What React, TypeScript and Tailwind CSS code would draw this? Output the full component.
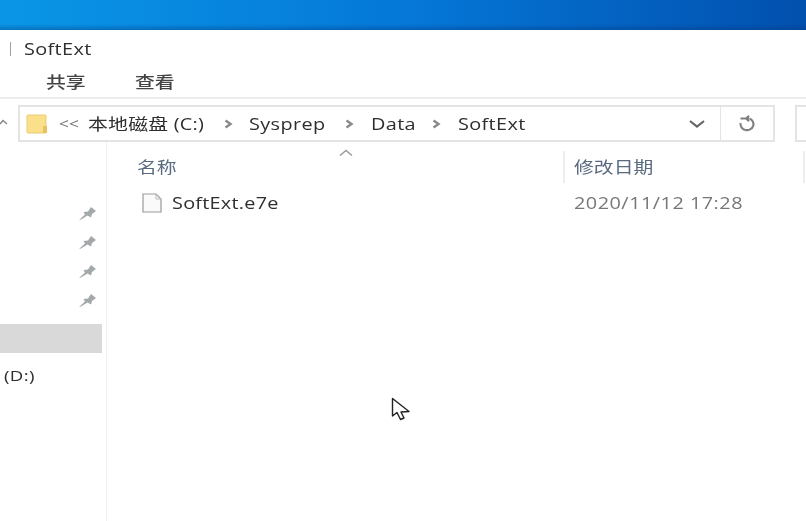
import React from 'react';

const font = { fontFamily: '"Open Sans", "Noto Sans CJK SC", sans-serif' };

// the shot is stretched sideways, so text is scaled and its box holds the final width
const Label: React.FC<{ w: string; className?: string; children: React.ReactNode }> = ({ w, className = '', children }) => (
    <span className={`${w} ${className} shrink-0 block whitespace-nowrap`}>
        <span className="inline-block origin-left scale-x-[1.24] blur-[0.3px]">{children}</span>
    </span>
);

const Pin = () => (
    <svg width="19" height="16" viewBox="0 0 19 16" className="block">
        <path d="M1 15 L7 9.5 L5.5 7 L10 6.5 L13 2 L18 6 L14 9 L13 12.5 L9.5 10.5 L3 14.5 Z" fill="#a3a8ab" />
    </svg>
);

const Crumb = () => (
    <svg width="9" height="10" viewBox="0 0 9 10" className="shrink-0">
        <path d="M1.5 1.5 L6.5 5 L1.5 8.5" fill="none" stroke="#8a8a8a" strokeWidth="2.4" />
    </svg>
);

export default function App() {
    return (
        <div className="w-[806px] h-[521px] overflow-hidden bg-white flex flex-col relative text-[#2e2e2e]" style={font}>
            <div className="h-[30px] shrink-0 bg-[linear-gradient(180deg,transparent_80%,rgba(0,50,120,0.35)),linear-gradient(90deg,#0a96e6_0%,#0578d8_50%,#0250ae_100%)]" />

            <div className="h-[37px] shrink-0 flex items-center">
                <div className="w-px h-[14px] bg-[#a0a0a0] ml-[10px] mr-[13px]" />
                <Label w="w-[66px]" className="text-[16px] tracking-[0.3px]">SoftExt</Label>
            </div>

            <div className="h-[32px] shrink-0 flex items-center border-b-2 border-[#ececec] text-[16px] text-[#444] font-medium">
                <Label w="w-[41px]" className="ml-[46px]">共享</Label>
                <Label w="w-[40px]" className="ml-[48px]">查看</Label>
            </div>

            <div className="h-[43px] shrink-0 flex items-end">
                <svg width="18" height="36" viewBox="0 0 18 36" className="shrink-0">
                    <path d="M0 18 L3 14.5 L7 18" fill="none" stroke="#888" strokeWidth="1.5" />
                </svg>
                <div className="w-[757px] h-[37px] border-2 border-[#e4e4e4] flex items-center shrink-0">
                    <svg width="22" height="20" viewBox="0 0 22 20" className="ml-[6px] shrink-0">
                        <rect x="1" y="1" width="19" height="18" rx="1" fill="#fbe08c" stroke="#eccb6f" />
                        <rect x="17" y="12" width="4" height="7" fill="#e8c25c" />
                    </svg>
                    <Label w="w-[16px]" className="ml-[11px] text-[14px] text-[#777]">&lt;&lt;</Label>
                    <Label w="w-[119px]" className="ml-[13px] text-[16px] tracking-[0.2px]">本地磁盘 (C:)</Label>
                    <span className="ml-[17px]"><Crumb /></span>
                    <Label w="w-[79px]" className="ml-[16px] text-[16px] tracking-[0.3px]">Sysprep</Label>
                    <span className="ml-[17px]"><Crumb /></span>
                    <Label w="w-[44px]" className="ml-[17px] text-[16px] tracking-[0.3px]">Data</Label>
                    <span className="ml-[17px]"><Crumb /></span>
                    <Label w="w-[67px]" className="ml-[17px] text-[16px] tracking-[0.3px]">SoftExt</Label>
                    <svg width="18" height="10" viewBox="0 0 18 10" className="ml-auto mr-[14px] shrink-0">
                        <path d="M2 2 L9 7.5 L16 2" fill="none" stroke="#666" strokeWidth="2.2" />
                    </svg>
                    <div className="w-[53px] h-full border-l border-[#e4e4e4] flex items-center justify-center shrink-0">
                        <svg width="18" height="18" viewBox="0 0 18 18">
                            <path d="M2.5 3.5 H11 M11 0.8 L8.2 3.5 L11 6.2 M11.5 3.6 A6.5 6 0 1 1 2.6 8" fill="none" stroke="#808080" strokeWidth="2.1" />
                        </svg>
                    </div>
                </div>
                <div className="ml-[20px] flex-1 h-[37px] border-y-2 border-l-2 border-[#e4e4e4]" />
            </div>

            <div className="flex-1 flex min-h-0">
                <div className="w-[107px] shrink-0 border-r border-[#f0f0f0] pt-[63px] flex flex-col">
                    <div className="flex flex-col gap-[13px] items-end pr-[9px]">
                        <Pin />
                        <Pin />
                        <Pin />
                        <Pin />
                    </div>
                    <div className="h-[29px] w-[102px] bg-[#d9d9d9] mt-[16px]" />
                    <Label w="w-[32px]" className="text-[15px] ml-[4px] mt-[11px] tracking-[0.3px]">(D:)</Label>
                </div>

                <div className="flex-1 relative">
                    <div className="flex h-[32px] mt-[9px] items-center text-[16px] text-[#5a6b80]">
                        <Label w="w-[426px]" className="ml-[30px]">名称</Label>
                        <div className="w-[2px] h-[32px] bg-[#eeeeee]" />
                        <Label w="w-[229px]" className="ml-[9px]">修改日期</Label>
                        <div className="w-[2px] h-[32px] bg-[#eeeeee]" />
                    </div>
                    <svg width="16" height="8" viewBox="0 0 16 8" className="absolute left-[231px] top-[7px]">
                        <path d="M2 6.5 L8 1.5 L14 6.5" fill="none" stroke="#999" strokeWidth="1.5" />
                    </svg>
                    <div className="flex items-center mt-[7px] h-[26px]">
                        <svg width="20" height="20" viewBox="0 0 20 20" className="ml-[35px] shrink-0">
                            <path d="M1 1 H14 L19 6 V19 H1 Z" fill="#fafafa" stroke="#999" strokeWidth="1.2" />
                            <path d="M14 1 V6 H19" fill="none" stroke="#bbb" />
                        </svg>
                        <Label w="w-[402px]" className="ml-[10px] text-[16px] tracking-[0.2px]">SoftExt.e7e</Label>
                        <Label w="w-[169px]" className="text-[16px] text-[#777] tracking-[0.4px]">2020/11/12 17:28</Label>
                    </div>
                </div>
            </div>

            <svg width="22" height="26" viewBox="0 0 22 26" className="absolute left-[391px] top-[397px]">
                <path d="M1.5 1.5 V19 L6 15.5 L9.5 22.5 L13 21 L10 15 L18 14.5 Z" fill="#fff" stroke="#222" strokeWidth="1.4" strokeLinejoin="round" />
            </svg>
        </div>
    );
}
